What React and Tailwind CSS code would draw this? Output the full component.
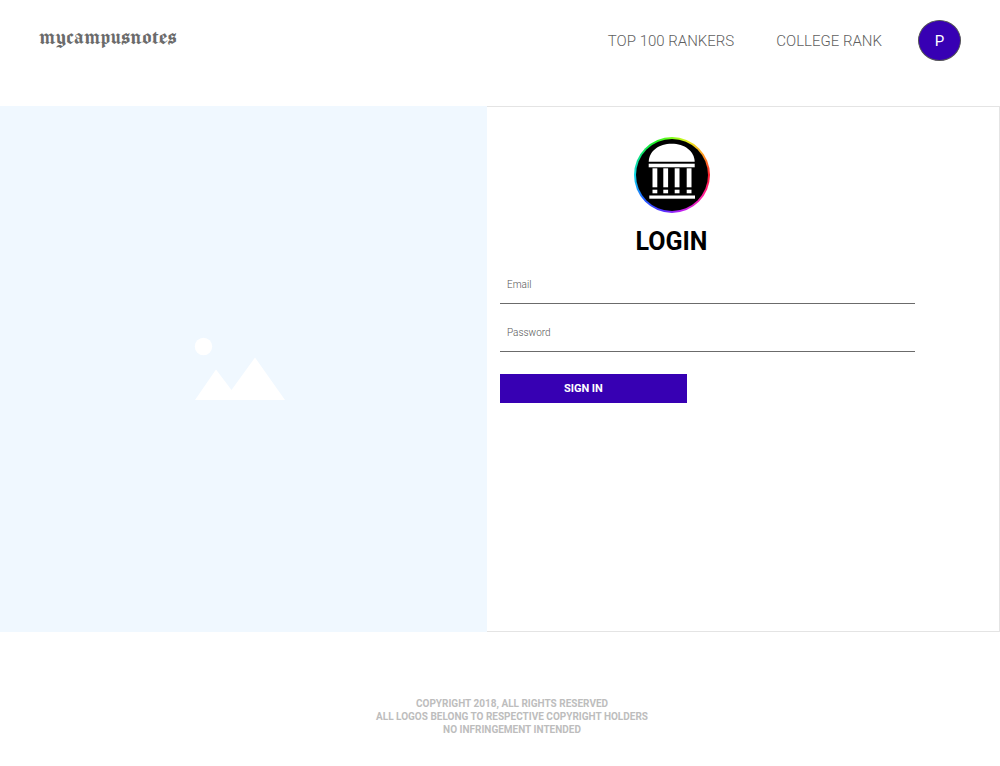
import React from "react";

function CampusLogo() {
  return (
    <div className="size-19 rounded-full bg-[conic-gradient(#80ff20,#e8f020_25deg,#ff9020_60deg,#ff1f2f_90deg,#ff20a0_125deg,#c020f0_165deg,#5030ff_195deg,#2060ff_230deg,#10d8e8_270deg,#10e080_300deg,#20f020_335deg,#80ff20)] p-0.5">
      <svg viewBox="0 0 72 72" className="block size-full" role="img" aria-label="Campus">
        <circle cx="36" cy="36" r="36" fill="#000" />
        <g fill="#fff">
          <path d="M12.700 22.700C13 12 23 4.700 35.700 4.700S58.400 12 58.700 22.700Z" />
          <rect x="12.700" y="24.700" width="46" height="3.600" />
          <rect x="16.500" y="29.300" width="4.800" height="19" />
          <rect x="27.300" y="29.300" width="4.800" height="19" />
          <rect x="38.700" y="29.300" width="4.800" height="19" />
          <rect x="50.700" y="29.300" width="4.800" height="19" />
          <rect x="16.500" y="50.700" width="4.800" height="3.600" />
          <rect x="27.300" y="50.700" width="4.800" height="3.600" />
          <rect x="38.700" y="50.700" width="4.800" height="3.600" />
          <rect x="50.700" y="50.700" width="4.800" height="3.600" />
          <rect x="13.300" y="56.500" width="45.700" height="3.200" />
        </g>
      </svg>
    </div>
  );
}

function Field({ id, label, type }) {
  return (
    <div className="h-12">
      <input
        id={id}
        type={type}
        aria-label={label}
        placeholder={label}
        className="block h-10 w-full border-b border-[#6b6b6b] px-[7px] pt-0.5 text-[10px] font-light text-[#555] outline-none placeholder:text-[#555]"
      />
    </div>
  );
}

export default function App() {
  return (
    <div className="min-h-screen bg-white font-['Roboto',sans-serif]">
      <header className="flex h-[106px] items-start justify-between pt-5 pr-[39px] pl-[39px]">
        <a
          href="#"
          className="pt-1 font-['Manufacturing_Consent','Old_English_Text_MT','Liberation_Serif',serif] text-[25px] leading-6 text-[#6b6b6b]"
        >
          mycampusnotes
        </a>
        <nav className="flex items-center text-[15px] font-light text-[#5f5f5f]">
          <a href="#" className="mr-[42px] pt-0.5">
            TOP 100 RANKERS
          </a>
          <a href="#" className="mr-9 pt-0.5">
            COLLEGE RANK
          </a>
          <button
            type="button"
            aria-label="Profile"
            className="h-[41px] w-[43px] rounded-[50%] border border-[#555] bg-[#3700b3] pt-0.5 font-normal text-white"
          >
            P
          </button>
        </nav>
      </header>

      <main className="flex min-h-[526px]">
        <div className="flex w-[48.7%] items-center justify-center bg-[#f0f8ff]">
          <svg viewBox="0 0 92 64" className="mr-2 h-16 w-[92px]" fill="#fff" aria-hidden="true">
            <circle cx="9.500" cy="9.500" r="8.700" />
            <path d="M1 63 22 32.500 37.500 53 61 20.500 91 63Z" />
          </svg>
        </div>
        <section className="flex-1 border border-l-0 border-[#e4e4e4] pl-[13px]">
          <div className="flex w-[343px] flex-col items-center pt-[30px]">
            <CampusLogo />
            <h1 className="mt-[15px] text-[25px] leading-7 font-bold text-black">LOGIN</h1>
          </div>
          <form className="mt-2 w-5/6 max-w-[415px]" onSubmit={(e) => e.preventDefault()}>
            <Field id="email" label="Email" type="email" />
            <Field id="password" label="Password" type="password" />
            <button
              type="submit"
              className="mt-3.5 h-[29px] w-[45%] bg-[#3700b3] pt-0.5 pr-5 text-[11px] font-bold text-white"
            >
              SIGN IN
            </button>
          </form>
        </section>
      </main>

      <footer className="pt-[65px] pb-7 pl-6 text-center text-[10px] leading-[13px] font-bold text-[#bdbdbd]">
        <p>COPYRIGHT 2018, ALL RIGHTS RESERVED</p>
        <p>ALL LOGOS BELONG TO RESPECTIVE COPYRIGHT HOLDERS</p>
        <p>NO INFRINGEMENT INTENDED</p>
      </footer>
    </div>
  );
}
